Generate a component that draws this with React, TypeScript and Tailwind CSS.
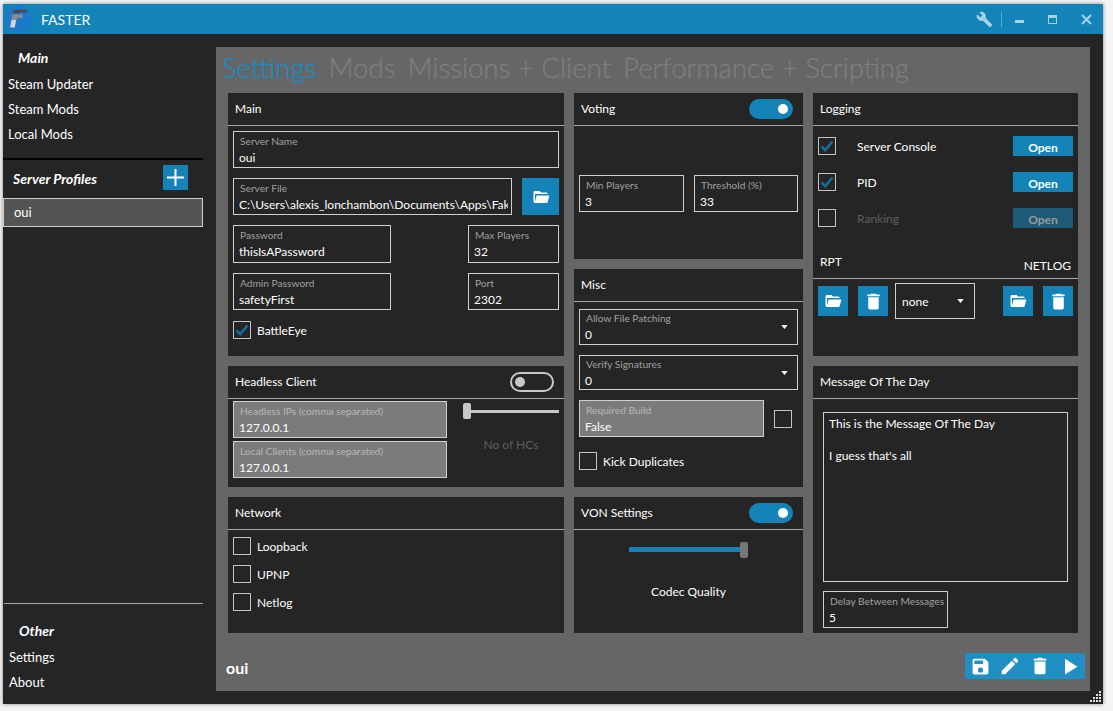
import type { ReactNode } from "react";

const ICONS = {
  folder: "M19,20H4C2.89,20 2,19.1 2,18V6C2,4.89 2.89,4 4,4H10L12,6H19A2,2 0 0,1 21,8H21L4,8V18L6.14,10H23.21L20.93,18.5C20.7,19.37 19.92,20 19,20Z",
  trash: "M19,4H15.5L14.5,3H9.5L8.5,4H5V6H19M6,19A2,2 0 0,0 8,21H16A2,2 0 0,0 18,19V7H6V19Z",
  save: "M15,9H5V5H15M12,19A3,3 0 0,1 9,16A3,3 0 0,1 12,13A3,3 0 0,1 15,16A3,3 0 0,1 12,19M17,3H5C3.89,3 3,3.9 3,5V19A2,2 0 0,0 5,21H19A2,2 0 0,0 21,19V7L17,3Z",
  pencil: "M20.71,7.04C21.1,6.65 21.1,6 20.71,5.63L18.37,3.29C18,2.9 17.35,2.9 16.96,3.29L15.12,5.12L18.87,8.87M3,17.25V21H6.75L17.81,9.93L14.06,6.18L3,17.25Z",
  play: "M8,5.14V19.14L19,12.14L8,5.14Z",
  wrench: "M22.7,19L13.6,9.9C14.5,7.6 14,4.9 12.1,3C10.1,1 7.1,0.6 4.7,1.7L9,6L6,9L1.6,4.7C0.4,7.1 0.9,10.1 2.9,12.1C4.8,14 7.5,14.5 9.8,13.6L18.9,22.7C19.3,23.1 19.9,23.1 20.3,22.7L22.6,20.4C23.1,20 23.1,19.3 22.7,19Z",
};

function Icon({ name, className }: { name: keyof typeof ICONS; className: string }) {
  return (
    <svg viewBox="0 0 24 24" className={className} fill="currentColor">
      <path d={ICONS[name]} />
    </svg>
  );
}

function Panel({ title, right, className, children }: { title: string; right?: ReactNode; className: string; children: ReactNode }) {
  return (
    <div className={`bg-[#252525] flex flex-col ${className}`}>
      <div className="h-[33px] shrink-0 border-b border-[#a8a8a8] flex items-center justify-between pl-[7px] pr-[10px] text-[12px] text-white">
        <span>{title}</span>
        {right}
      </div>
      {children}
    </div>
  );
}

function Field({ label, value, className, disabled, select }: { label: string; value: string; className: string; disabled?: boolean; select?: boolean }) {
  return (
    <div className={`border border-[#cfcfcf] flex items-center justify-between overflow-hidden ${select ? "pr-[9px]" : "pr-[3px]"} ${disabled ? "bg-[#7b7b7b]" : ""} ${className}`}>
      <div className="min-w-0 whitespace-nowrap overflow-hidden">
        <div className={`pl-[6px] pt-[1px] h-[16px] text-[10.2px] leading-[14px] ${disabled ? "text-[#b8b8b8]" : "text-[#a0a0a0]"}`}>{label}</div>
        <div className="pl-[5px] text-[12px] leading-[18px] text-white">{value}</div>
      </div>
      {select && <Caret />}
    </div>
  );
}

function Caret() {
  return (
    <svg viewBox="0 0 8 5" className="w-[7px] h-[4px] shrink-0 text-white" fill="currentColor">
      <path d="M0 0H8L4 5Z" />
    </svg>
  );
}

function Check({ label, checked, muted, className }: { label?: string; checked?: boolean; muted?: boolean; className?: string }) {
  return (
    <div className={`flex items-center ${className ?? ""}`}>
      <div className="w-[18px] h-[18px] shrink-0 border border-[#c4c4c4] flex items-center justify-center">
        {checked && (
          <svg viewBox="0 0 16 16" className="w-[16px] h-[16px] text-[#0f6e9e]" fill="none" stroke="currentColor" strokeWidth="2.6">
            <path d="M2.5 8.5L6.2 12L13.5 3.5" />
          </svg>
        )}
      </div>
      {label && <span className={`text-[12px] leading-[16px] pt-[2px] ${muted ? "text-[#5e5e5e]" : "text-white"}`}>{label}</span>}
    </div>
  );
}

function Toggle({ on }: { on?: boolean }) {
  return on ? (
    <div className="w-[44px] h-[20px] rounded-full bg-[#1484b8] flex items-center justify-end pr-[5px]">
      <div className="w-[10px] h-[10px] rounded-full bg-white" />
    </div>
  ) : (
    <div className="w-[44px] h-[20px] rounded-full border-2 border-[#c8c8c8] flex items-center pl-[3px]">
      <div className="w-[10px] h-[10px] rounded-full bg-[#c8c8c8]" />
    </div>
  );
}

function IconBtn({ name, className }: { name: keyof typeof ICONS; className: string }) {
  return (
    <div className={`bg-[#1484b8] shrink-0 flex items-center justify-center text-white ${className}`}>
      <Icon name={name} className={name === "trash" ? "w-[21px] h-[21px]" : "w-[18px] h-[18px]"} />
    </div>
  );
}

function LogRow({ label, muted }: { label: string; muted?: boolean }) {
  return (
    <div className="flex items-center h-[20px]">
      <Check checked={!muted} />
      <span className={`ml-[21px] flex-1 pt-[2px] text-[12px] ${muted ? "text-[#5e5e5e]" : "text-white"}`}>{label}</span>
      <div className={`w-[60px] h-[20px] flex items-center justify-center pt-[3px] text-[12px] font-bold ${muted ? "bg-[#1c5a76] text-[#9a9a9a]" : "bg-[#1484b8] text-white"}`}>Open</div>
    </div>
  );
}

function SideItem({ children }: { children: ReactNode }) {
  return <div className="h-[25px] leading-[25px] text-[13px] text-white">{children}</div>;
}

// window resize grip, bottom right corner
function Grip() {
  const dots = [[9, 0], [6, 3], [9, 3], [3, 6], [6, 6], [9, 6], [0, 9], [3, 9], [6, 9], [9, 9]];
  return (
    <svg viewBox="0 0 11 11" className="absolute right-[2px] bottom-[2px] w-[11px] h-[11px] text-[#e0e0e0]" fill="currentColor">
      {dots.map(([x, y]) => (
        <rect key={`${x}-${y}`} x={x} y={y} width="2" height="2" />
      ))}
    </svg>
  );
}

export default function App() {
  return (
    <div className="w-[1113px] h-[711px] bg-[#f4f4f4] pl-[3px] pt-[4px] overflow-hidden font-['Lato',sans-serif]">
      <div className="relative w-[1100px] h-[700px] bg-[#252525] flex flex-col shadow-[0_0_4px_rgba(0,0,0,0.45)]">
        <div className="h-[30px] shrink-0 bg-[#1484b8] flex items-center text-white">
          <svg viewBox="0 0 30 30" className="w-[28px] h-[28px] ml-[1px] shrink-0">
            <circle cx="15" cy="15" r="14.5" fill="#1c78c8" />
            <path d="M10 5H25V8H16V9H10Z" fill="#4a4a4a" />
            <path d="M9 10H20V14H14V16H8Z" fill="#8c8c8c" />
            <path d="M8 16H13L11.5 24H6.5Z" fill="#d5d5d5" />
          </svg>
          <span className="ml-[9px] text-[14px]">FASTER</span>
          <div className="ml-auto flex items-center text-[#a6d2e6]">
            <Icon name="wrench" className="w-[17px] h-[17px]" />
            <div className="w-px h-[15px] bg-[#5da9cc] ml-[8px]" />
            <div className="w-[9px] h-[3px] bg-[#a6d2e6] ml-[13px] mt-[4px]" />
            <div className="w-[9px] h-[9px] border border-[#a6d2e6] border-t-[3px] ml-[24px]" />
            <svg viewBox="0 0 11 11" className="w-[11px] h-[11px] ml-[24px] mr-[11px]" stroke="currentColor" strokeWidth="2">
              <path d="M1 1L10 10M10 1L1 10" />
            </svg>
          </div>
        </div>
        <div className="flex flex-1 min-h-0">
          <div className="w-[213px] shrink-0 flex flex-col">
            <div className="pl-[15px] pt-[13px] h-[38px] text-[14px] font-bold italic text-white">Main</div>
            <div className="pl-[5px]">
              <SideItem>Steam Updater</SideItem>
              <SideItem>Steam Mods</SideItem>
              <SideItem>Local Mods</SideItem>
            </div>
            <div className="w-[200px] h-[2px] bg-black mt-[11px]" />
            <div className="h-[38px] flex items-start justify-between pl-[10px] pr-[28px]">
              <span className="text-[14px] leading-[18px] mt-[10px] font-bold italic text-white">Server Profiles</span>
              <div className="w-[25px] h-[25px] mt-[5px] bg-[#1484b8] flex items-center justify-center">
                <svg viewBox="0 0 17 17" className="w-[17px] h-[17px] text-white" stroke="currentColor" strokeWidth="2">
                  <path d="M8.5 0V17M0 8.5H17" />
                </svg>
              </div>
            </div>
            <div className="w-[200px] h-[29px] bg-[#545454] border border-[#cfcfcf] pl-[10px] leading-[27px] text-[13px] text-white">oui</div>
            <div className="flex-1" />
            <div className="w-[199px] h-px bg-[#a8a8a8] ml-[1px]" />
            <div className="pl-[16px] pt-[16px] h-[41px] text-[14px] font-bold italic text-white">Other</div>
            <div className="pl-[6px] h-[59px]">
              <SideItem>Settings</SideItem>
              <SideItem>About</SideItem>
            </div>
          </div>
          <div className="w-[874px] h-[644px] mt-[13px] bg-[#666666] flex flex-col">
            <div className="h-[46px] shrink-0 pl-[6px] flex gap-[12px] text-[27.6px] leading-[42px] font-light whitespace-nowrap text-[#7e7e7e] [-webkit-text-stroke:0.3px_currentColor]">
              <span className="text-[#1a8cc2]">Settings</span>
              <span>Mods</span>
              <span>Missions + Client</span>
              <span>Performance + Scripting</span>
            </div>
            <div className="h-[540px] shrink-0 ml-[12px] flex gap-[10px]">
              <div className="w-[336px] flex flex-col gap-[10px]">
                <Panel title="Main" className="h-[263px]">
                  <div className="px-[5px] pt-[5px] flex flex-col gap-[10px]">
                    <Field label="Server Name" value="oui" className="h-[37px]" />
                    <div className="flex gap-[10px]">
                      <Field label="Server File" value="C:\Users\alexis_lonchambon\Documents\Apps\Fake" className="h-[37px] w-[279px]" />
                      <IconBtn name="folder" className="w-[37px] h-[37px]" />
                    </div>
                    <div className="flex justify-between">
                      <Field label="Password" value="thisIsAPassword" className="h-[38px] w-[158px]" />
                      <Field label="Max Players" value="32" className="h-[38px] w-[91px]" />
                    </div>
                    <div className="flex justify-between">
                      <Field label="Admin Password" value="safetyFirst" className="h-[37px] w-[158px]" />
                      <Field label="Port" value="2302" className="h-[37px] w-[91px]" />
                    </div>
                    <Check label="BattleEye" checked className="gap-[6px] mt-px" />
                  </div>
                </Panel>
                <Panel title="Headless Client" right={<Toggle />} className="h-[121px]">
                  <div className="flex pl-[5px] pr-[5px] pt-[2px]">
                    <div className="flex flex-col gap-[3px] w-[214px]">
                      <Field disabled label="Headless IPs (comma separated)" value="127.0.0.1" className="h-[37px]" />
                      <Field disabled label="Local Clients (comma separated)" value="127.0.0.1" className="h-[37px]" />
                    </div>
                    <div className="ml-[16px] flex-1 flex flex-col">
                      <div className="flex items-center h-[16px] mt-[2px]">
                        <div className="w-[8px] h-[16px] rounded-[2px] bg-[#c8c8c8]" />
                        <div className="flex-1 h-[3px] bg-[#c8c8c8]" />
                      </div>
                      <div className="text-center text-[12px] leading-[18px] text-[#5e5e5e] mt-[17px]">No of HCs</div>
                    </div>
                  </div>
                </Panel>
                <Panel title="Network" className="h-[136px]">
                  <div className="px-[5px] pt-[7px] flex flex-col gap-[10px]">
                    <Check label="Loopback" className="gap-[6px]" />
                    <Check label="UPNP" className="gap-[6px]" />
                    <Check label="Netlog" className="gap-[6px]" />
                  </div>
                </Panel>
              </div>
              <div className="w-[229px] flex flex-col gap-[10px]">
                <Panel title="Voting" right={<Toggle on />} className="h-[166px]">
                  <div className="px-[5px] pt-[49px] flex gap-[10px]">
                    <Field label="Min Players" value="3" className="h-[37px] w-[105px]" />
                    <Field label="Threshold (%)" value="33" className="h-[37px] w-[104px]" />
                  </div>
                </Panel>
                <Panel title="Misc" className="h-[218px]">
                  <div className="px-[5px] pt-[7px] flex flex-col gap-[10px]">
                    <Field select label="Allow File Patching" value="0" className="h-[36px]" />
                    <Field select label="Verify Signatures" value="0" className="h-[35px]" />
                    <div className="flex items-center gap-[10px]">
                      <Field disabled label="Required Build" value="False" className="h-[37px] w-[185px]" />
                      <Check />
                    </div>
                    <Check label="Kick Duplicates" className="gap-[6px] mt-[5px]" />
                  </div>
                </Panel>
                <Panel title="VON Settings" right={<Toggle on />} className="h-[136px]">
                  <div className="flex items-center justify-center h-[16px] mt-[12px]">
                    <div className="w-[111px] h-[5px] mb-[1px] bg-[#1484b8]" />
                    <div className="w-[8px] h-[16px] rounded-[2px] bg-[#777777]" />
                  </div>
                  <div className="text-center text-[12px] leading-[18px] text-white mt-[25px]">Codec Quality</div>
                </Panel>
              </div>
              <div className="w-[265px] flex flex-col gap-[10px]">
                <Panel title="Logging" className="h-[263px]">
                  <div className="pl-[5px] pr-[5px] pt-[10px] flex flex-col gap-[16px]">
                    <LogRow label="Server Console" />
                    <LogRow label="PID" />
                    <LogRow label="Ranking" muted />
                  </div>
                  <div className="h-[51px] shrink-0 border-b border-[#a8a8a8] flex justify-between pl-[7px] pr-[7px] text-[12px] text-white">
                    <span className="mt-[25px]">RPT</span>
                    <span className="mt-[29px]">NETLOG</span>
                  </div>
                  <div className="flex pl-[5px] pt-[7px] items-start">
                    <IconBtn name="folder" className="w-[30px] h-[30px]" />
                    <IconBtn name="trash" className="w-[30px] h-[30px] ml-[10px]" />
                    <div className="w-[80px] h-[36px] -mt-[3px] ml-[7px] border border-[#cfcfcf] flex items-center justify-between pl-[6px] pr-[10px] text-[12px] text-white">
                      <span className="pt-[2px]">none</span>
                      <Caret />
                    </div>
                    <IconBtn name="folder" className="w-[30px] h-[30px] ml-[28px]" />
                    <IconBtn name="trash" className="w-[30px] h-[30px] ml-[10px]" />
                  </div>
                </Panel>
                <Panel title="Message Of The Day" className="h-[267px]">
                  <div className="pl-[10px] pt-[13px]">
                    <div className="w-[245px] h-[170px] border border-[#cfcfcf] pl-[5px] pt-[1px] text-[12px] text-white">
                      <div className="h-[32px] leading-[20px]">This is the Message Of The Day</div>
                      <div className="leading-[20px]">I guess that's all</div>
                    </div>
                    <Field label="Delay Between Messages" value="5" className="h-[37px] w-[125px] mt-[9px]" />
                  </div>
                </Panel>
              </div>
            </div>
            <div className="flex-1 flex justify-between pl-[10px] pr-[5px] pt-[20px]">
              <span className="text-[16px] font-bold text-white leading-[29px]">oui</span>
              <div className="w-[120px] h-[26px] bg-[#1f8fc4] flex items-center text-white">
                <div className="w-[30px] flex justify-center"><Icon name="save" className="w-[21px] h-[21px]" /></div>
                <div className="w-[30px] flex justify-center"><Icon name="pencil" className="w-[22px] h-[22px]" /></div>
                <div className="w-[30px] flex justify-center"><Icon name="trash" className="w-[22px] h-[22px]" /></div>
                <div className="w-[30px] flex justify-center"><Icon name="play" className="w-[27px] h-[27px] -ml-[2px]" /></div>
              </div>
            </div>
          </div>
        </div>
        <Grip />
      </div>
    </div>
  );
}
